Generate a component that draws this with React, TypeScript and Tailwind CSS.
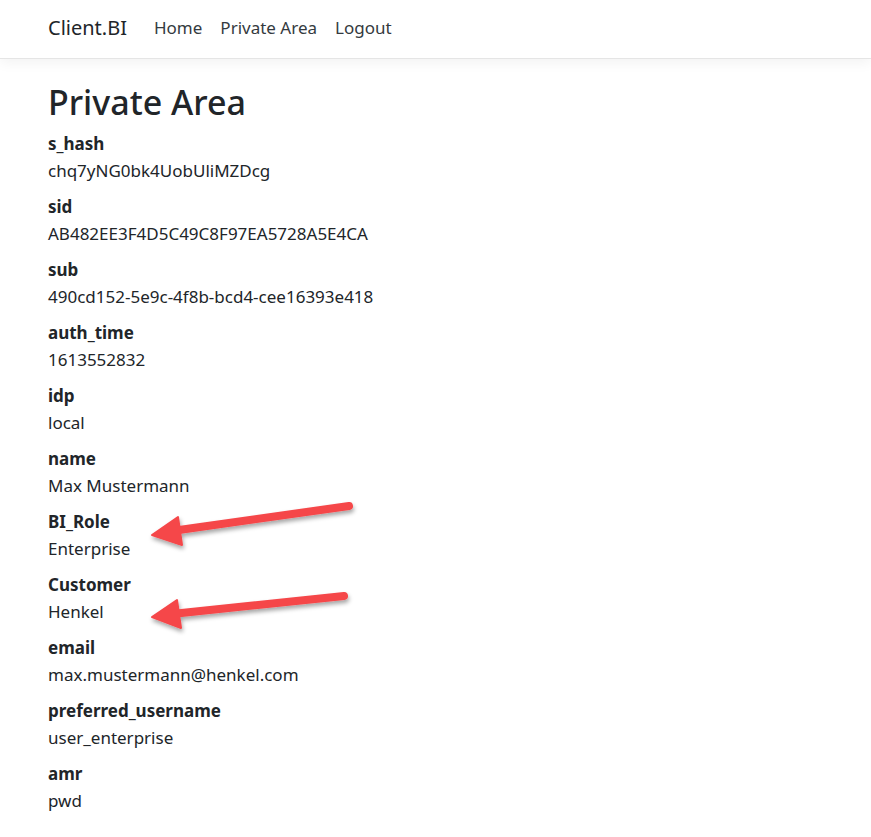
const claims: [string, string][] = [
  ["s_hash", "chq7yNG0bk4UobUliMZDcg"],
  ["sid", "AB482EE3F4D5C49C8F97EA5728A5E4CA"],
  ["sub", "490cd152-5e9c-4f8b-bcd4-cee16393e418"],
  ["auth_time", "1613552832"],
  ["idp", "local"],
  ["name", "Max Mustermann"],
  ["BI_Role", "Enterprise"],
  ["Customer", "Henkel"],
  ["email", "max.mustermann@henkel.com"],
  ["preferred_username", "user_enterprise"],
  ["amr", "pwd"],
];

const Arrows = () => (
  <svg className="absolute left-0 top-0 pointer-events-none" width="871" height="837">
    <defs>
      <filter id="sh" x="-20%" y="-50%" width="140%" height="200%">
        <feDropShadow dx="1" dy="3" stdDeviation="2" floodColor="#000" floodOpacity="0.35" />
      </filter>
    </defs>
    <g filter="url(#sh)" fill="#f5474a" stroke="#f5474a" strokeLinecap="round" strokeLinejoin="round">
      <line x1="349" y1="506" x2="172" y2="531" strokeWidth="8" />
      <polygon points="152,535 178,517 182,545" strokeWidth="2" />
      <line x1="344" y1="596" x2="172" y2="614" strokeWidth="8" />
      <polygon points="152,617 177,600 181,628" strokeWidth="2" />
    </g>
  </svg>
);

export default function App() {
  return (
    <div className="relative min-h-[837px] bg-white text-[#212529] font-['Noto_Sans',sans-serif]">
      <nav className="h-[59px] border-b border-[#e5e5e5] shadow-[0_4px_12px_rgba(0,0,0,0.05)] flex items-center px-[48px] pb-[2px]">
        <span className="text-[20px] mr-[27px] text-[#212529]">Client.BI</span>
        <ul className="flex gap-[18px] text-[17px] text-[#343a40]">
          <li>Home</li>
          <li>Private Area</li>
          <li>Logout</li>
        </ul>
      </nav>
      <main className="px-[48px] pt-[19px]">
        <h1 className="text-[34px] leading-[48px] font-medium mb-[4px]">Private Area</h1>
        <dl className="text-[17px]">
          {claims.map(([k, v]) => (
            <div key={k}>
              <dt className="font-bold leading-[27px]">{k}</dt>
              <dd className="leading-[27px] mb-[9px]">{v}</dd>
            </div>
          ))}
        </dl>
      </main>
      <Arrows />
    </div>
  );
}
